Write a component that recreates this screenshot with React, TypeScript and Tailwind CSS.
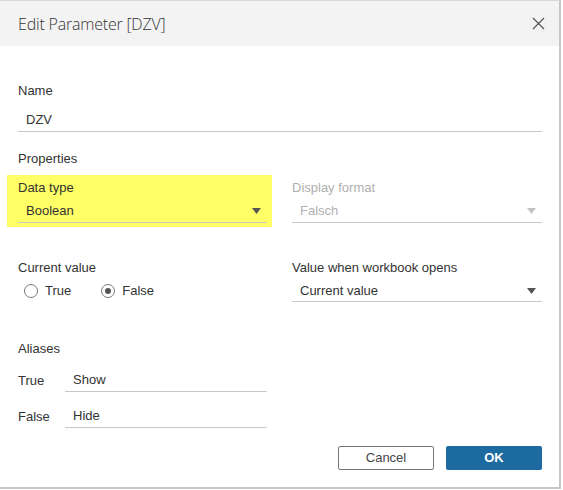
import React, { useState } from 'react';

const font = { fontFamily: '"Liberation Sans", Arial, sans-serif' };

function Caret({ muted }: { muted?: boolean }) {
  return (
    <svg width="9" height="6" viewBox="0 0 9 6" className="shrink-0">
      <path d="M0 0 L9 0 L4.5 6 Z" fill={muted ? '#c4c4c4' : '#555555'} />
    </svg>
  );
}

function Select({ value, muted, className }: { value: string; muted?: boolean; className?: string }) {
  return (
    <div className={`flex items-center justify-between border-b border-[#c8c8c8] h-[22px] pl-2 pr-[6px] ${className ?? ''}`}>
      <span className={muted ? 'text-[#b0b0b0]' : 'text-[#333]'}>{value}</span>
      <Caret muted={muted} />
    </div>
  );
}

function Radio({ label, checked, onClick }: { label: string; checked: boolean; onClick: () => void }) {
  return (
    <button onClick={onClick} className="flex items-center gap-[7px] text-[#333]">
      <span className="w-[14px] h-[14px] rounded-full border border-[#7a7a7a] bg-white flex items-center justify-center">
        {checked && <span className="w-[6px] h-[6px] rounded-full bg-[#555]" />}
      </span>
      {label}
    </button>
  );
}

export default function App() {
  const [current, setCurrent] = useState<'true' | 'false'>('false');

  return (
    <div className="w-[563px] h-[490px] bg-white overflow-hidden text-[13px]" style={font}>
      <div className="w-[561px] h-[489px] border-r-2 border-b-2 border-[#c6c6c6] border-t border-t-[#d8d8d8] flex flex-col">
        {/* header */}
        <div className="h-[45px] bg-[#f3f3f3] flex items-center justify-between pl-[18px] pr-[14px]">
          <span className="text-[16px] text-[#333] tracking-[-0.2px]" style={{ fontFamily: '"Open Sans", "Liberation Sans", sans-serif', fontWeight: 300 }}>
            Edit Parameter [DZV]
          </span>
          <svg width="13" height="13" viewBox="0 0 13 13">
            <path d="M1 1 L12 12 M12 1 L1 12" stroke="#555" strokeWidth="1.2" />
          </svg>
        </div>

        {/* body */}
        <div className="flex-1 pl-[18px] pr-[17px] pt-[35px] text-[#333]">
          <div>Name</div>
          <div className="mt-[9px] border-b border-[#c8c8c8] h-[22px] pl-2">DZV</div>

          <div className="mt-[17px]">Properties</div>

          <div className="grid grid-cols-[249px_250px] gap-x-[25px] mt-[10px]">
            <div className="bg-[#ffff66] -ml-[11px] pl-[11px] -mr-[5px] pr-[5px] pt-[3px] pb-[4px] -mt-[3px]">
              <div>Data type</div>
              <Select value="Boolean" className="mt-[3px]" />
            </div>
            <div>
              <div className="text-[#b0b0b0]">Display format</div>
              <Select value="Falsch" muted className="mt-[3px]" />
            </div>

            <div className="mt-[31px]">
              <div>Current value</div>
              <div className="flex items-center gap-[30px] mt-[4px] pl-[6px]">
                <Radio label="True" checked={current === 'true'} onClick={() => setCurrent('true')} />
                <Radio label="False" checked={current === 'false'} onClick={() => setCurrent('false')} />
              </div>
            </div>
            <div className="mt-[31px]">
              <div>Value when workbook opens</div>
              <Select value="Current value" className="mt-[3px]" />
            </div>
          </div>

          <div className="mt-[37px]">Aliases</div>
          <div className="grid grid-cols-[47px_202px] items-center mt-[11px] gap-y-[14px]">
            <span>True</span>
            <div className="border-b border-[#c8c8c8] h-[22px] pl-2">Show</div>
            <span>False</span>
            <div className="border-b border-[#c8c8c8] h-[22px] pl-2">Hide</div>
          </div>

          <div className="flex justify-end gap-3 mt-[18px]">
            <button className="w-[96px] h-[24px] border border-[#777] rounded-[2px] text-[#444] text-[13px]">Cancel</button>
            <button className="w-[96px] h-[24px] bg-[#1c6aa0] rounded-[2px] text-white font-bold text-[13px]">OK</button>
          </div>
        </div>
      </div>
    </div>
  );
}
